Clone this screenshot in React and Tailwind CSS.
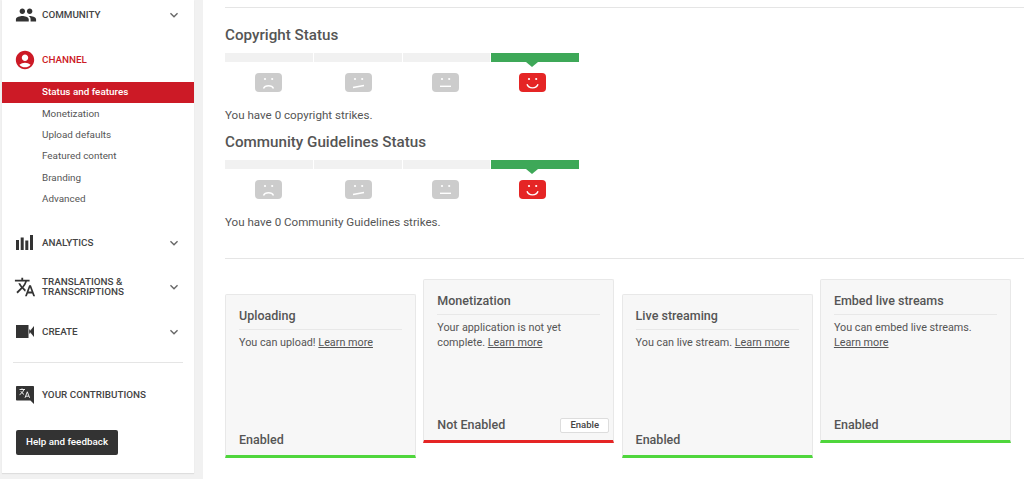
import React from "react";
import { MdPeople, MdAccountCircle, MdTranslate, MdExpandMore } from "react-icons/md";

function Bars({ className }) {
  return (
    <svg viewBox="0 0 17 15" className={className} fill="#333">
      <rect x="0" y="5" width="3" height="10" />
      <rect x="4.7" y="2.5" width="3" height="12.5" />
      <rect x="9.3" y="5.5" width="3" height="9.5" />
      <rect x="14" y="0" width="3" height="15" />
    </svg>
  );
}

function Camera({ className }) {
  return (
    <svg viewBox="0 0 18 13" className={className} fill="#333">
      <rect x="0" y="0" width="12.5" height="13" />
      <path d="M13.5 6.5L18 1v11z" />
      <rect x="13.2" y="4.5" width="1" height="4" />
    </svg>
  );
}

function Bubble({ className }) {
  return (
    <svg viewBox="0 0 18 18" className={className}>
      <path d="M.8 0h16.4a.8.8 0 0 1 .8.8V18l-3.6-3.4H.8a.8.8 0 0 1-.8-.8V.8A.8.8 0 0 1 .8 0z" fill="#333" />
      <path d="M3.5 3.5h5.5M6 2.4v1.1M7.8 3.5c-.5 2-2 4-4.3 5.2M4.8 5.2c.7 1.3 1.8 2.5 3.2 3.2M9 11.8l2.3-6 2.3 6M9.8 10.2h3" stroke="#fff" strokeWidth="0.9" fill="none" />
    </svg>
  );
}

function NavRow({ icon, label, red, chevron, className }) {
  return (
    <div className={`flex items-center pl-[14px] pr-[12px] ${className}`}>
      <div className="w-[26px] flex items-center shrink-0">{icon}</div>
      <div className={`flex-1 font-medium text-[9.85px] leading-[10px] uppercase ${red ? "text-[#cc1a26]" : "text-[#444444]"}`}>
        {label}
      </div>
      {chevron && <MdExpandMore className="text-[#666666] text-[16px] shrink-0" />}
    </div>
  );
}

function SubItem({ label, active }) {
  return (
    <div
      className={`h-[21.4px] flex items-center pl-[40px] text-[9.9px] ${
        active ? "bg-[#cc1a26] text-white font-medium" : "text-[#555555]"
      }`}
    >
      {label}
    </div>
  );
}

function Sidebar() {
  return (
    <aside className="ml-[2px] w-[192px] h-[473px] bg-white shrink-0 shadow-[0_1px_1px_rgba(0,0,0,0.08)]">
      <NavRow
        className="h-[30px]"
        chevron
        label="Community"
        icon={<MdPeople className="text-[#333333] text-[22px] -ml-[1px]" />}
      />
      <NavRow
        className="h-[30px] mt-[15px]"
        red
        label="Channel"
        icon={<MdAccountCircle className="text-[#cc1a26] text-[22px] -ml-[2px]" />}
      />
      <div className="mt-[7px]">
        <SubItem label="Status and features" active />
        <SubItem label="Monetization" />
        <SubItem label="Upload defaults" />
        <SubItem label="Featured content" />
        <SubItem label="Branding" />
        <SubItem label="Advanced" />
      </div>
      <NavRow
        className="h-[30px] mt-[17.5px]"
        chevron
        label="Analytics"
        icon={<Bars className="w-[17px] h-[15px]" />}
      />
      <NavRow
        className="h-[30px] mt-[14px]"
        chevron
        label={<>Translations &amp;<br />Transcriptions</>}
        icon={<MdTranslate className="text-[#333333] text-[22px] -ml-[2px]" />}
      />
      <NavRow
        className="h-[30px] mt-[15px]"
        chevron
        label="Create"
        icon={<Camera className="w-[18px] h-[13px]" />}
      />
      <div className="h-px bg-[#e5e5e5] mx-[11px] mt-[15.5px]" />
      <NavRow
        className="h-[30px] mt-[17px]"
        label="Your Contributions"
        icon={<Bubble className="w-[18px] h-[18px]" />}
      />
      <button className="ml-[14px] mt-[20px] w-[102px] h-[25px] bg-[#333333] rounded-[2px] text-white font-medium text-[9.85px] flex items-center justify-center">
        Help and feedback
      </button>
    </aside>
  );
}

function Face({ mouth, red }) {
  const paths = {
    sad: "M8.5 15.5c1.5-3.6 8.5-3.6 10 0",
    skew: "M8 14.5l11-2",
    flat: "M8 13.3h11",
    happy: "M8 11.3c1.5 4.8 9.5 4.8 11 0",
  };
  return (
    <svg viewBox="0 0 27 19" className="w-[27px] h-[19px]">
      <rect width="27" height="19" rx="4" fill={red ? "#e52525" : "#cccccc"} />
      <circle cx="10" cy="6" r="1.1" fill="#fff" />
      <circle cx="17.2" cy="6" r="1.1" fill="#fff" />
      <path d={paths[mouth]} stroke="#fff" strokeWidth="1.4" fill="none" />
    </svg>
  );
}

function Status({ title, text, className }) {
  const steps = [
    { mouth: "sad", shift: "translate-x-0" },
    { mouth: "skew", shift: "translate-x-[1px]" },
    { mouth: "flat", shift: "-translate-x-[1px]" },
    { mouth: "happy", shift: "-translate-x-[3px]" },
  ];
  return (
    <section className={className}>
      <h2 className="text-[15.2px] leading-[20px] font-medium text-[#555555]">{title}</h2>
      <div className="flex gap-px w-[354px] mt-[8px]">
        {steps.map((s, i) => (
          <div key={s.mouth} className="flex-1 flex flex-col items-center relative">
            <div className={`w-full h-[9px] ${i === 3 ? "bg-[#3ea858]" : "bg-[#f1f1f1]"}`} />
            {i === 3 && (
              <div className="absolute top-[9px] left-[41px] -translate-x-1/2 w-0 h-0 border-x-[6px] border-x-transparent border-t-[5px] border-t-[#3ea858]" />
            )}
            <div className={`mt-[11px] flex ${s.shift}`}>
              <Face mouth={s.mouth} red={i === 3} />
            </div>
          </div>
        ))}
      </div>
      <p className="mt-[15px] text-[11.6px] leading-[16px] text-[#555555]">{text}</p>
    </section>
  );
}

function Card({ title, children, footer, bar, button, className }) {
  return (
    <div
      className={`w-[191px] h-[164px] flex flex-col bg-[#f7f7f7] border-x border-t border-[#e8e8e8] rounded-t-[2px] border-b-[3px] ${bar} ${className}`}
    >
      <div className="mx-[13px] mt-[13px] pb-[5px] border-b border-[#e8e8e8] text-[12.5px] leading-[16px] font-medium text-[#555555]">
        {title}
      </div>
      <div className="mx-[13px] mt-[6px] text-[10.8px] leading-[14.5px] text-[#555555]">{children}</div>
      <div className="mt-auto mb-[7px] ml-[13px] mr-[4px] flex items-center justify-between h-[16px]">
        <span className="text-[12.5px] font-medium text-[#555555]">{footer}</span>
        {button && (
          <button className="w-[49px] h-[15px] bg-white border border-[#dddddd] rounded-[2px] text-[9.5px] font-medium text-[#444444] flex items-center justify-center">
            {button}
          </button>
        )}
      </div>
    </div>
  );
}

const Learn = () => <a className="underline">Learn more</a>;

export default function App() {
  return (
    <div className="flex h-[479px] w-[1024px] overflow-hidden bg-[#f1f1f1] font-['Roboto',sans-serif]">
      <Sidebar />
      <main className="ml-[9px] flex-1 bg-white pl-[22px] pt-[7px]">
        <div className="h-px bg-[#e5e5e5]" />
        <Status className="mt-[17px]" title="Copyright Status" text="You have 0 copyright strikes." />
        <Status
          className="mt-[9px]"
          title="Community Guidelines Status"
          text="You have 0 Community Guidelines strikes."
        />
        <div className="h-px bg-[#e5e5e5] mt-[28px]" />
        <div className="flex items-start gap-[7.3px] mt-[20px]">
          <Card className="mt-[15px]" title="Uploading" footer="Enabled" bar="border-b-[#4fd63c]">
            You can upload! <Learn />
          </Card>
          <Card title="Monetization" footer="Not Enabled" bar="border-b-[#e52525]" button="Enable">
            Your application is not yet complete. <Learn />
          </Card>
          <Card className="mt-[15px]" title="Live streaming" footer="Enabled" bar="border-b-[#4fd63c]">
            You can live stream. <Learn />
          </Card>
          <Card title="Embed live streams" footer="Enabled" bar="border-b-[#4fd63c]">
            You can embed live streams. <Learn />
          </Card>
        </div>
      </main>
    </div>
  );
}
